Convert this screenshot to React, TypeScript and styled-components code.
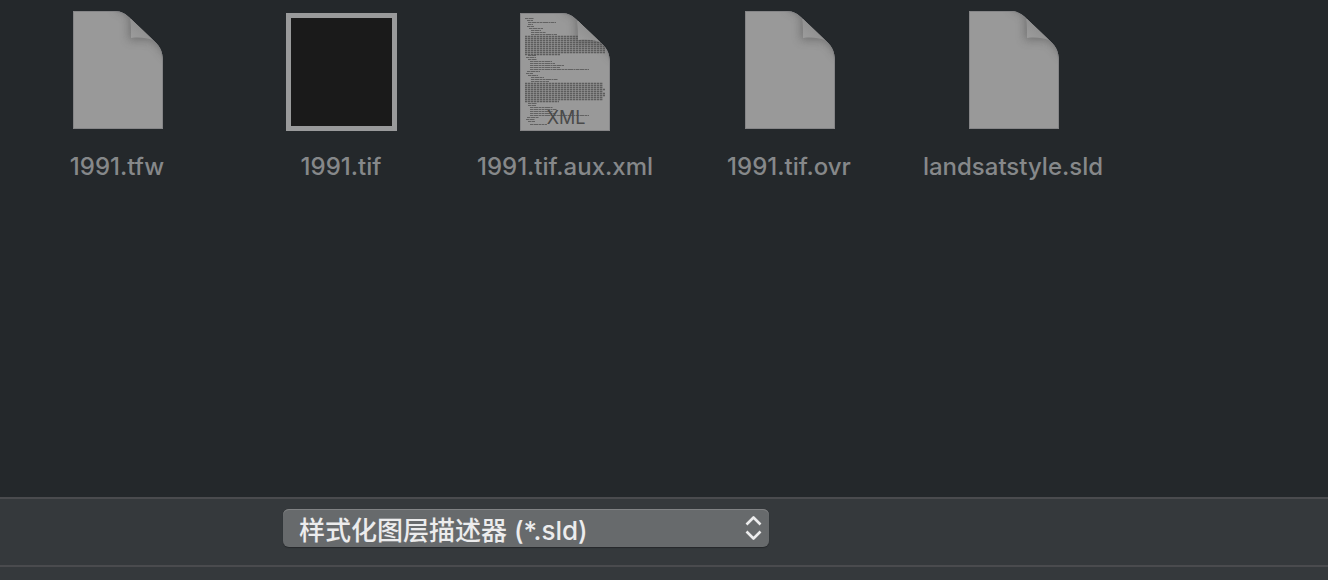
import React from "react";
import styled, { createGlobalStyle } from "styled-components";

const GlobalStyle = createGlobalStyle`
  *, *::before, *::after { box-sizing: border-box; }
  body {
    margin: 0;
    background: #24282b;
    font-family: Inter, "Noto Sans CJK SC", sans-serif;
  }
`;

const Dialog = styled.main`
  display: flex;
  flex-direction: column;
  min-height: 100vh;
`;

const FileGrid = styled.ul`
  flex: 1;
  display: grid;
  grid-template-columns: repeat(auto-fill, 224px);
  align-content: start;
  margin: 0;
  padding: 11px 5px;
  list-style: none;
`;

const FileItem = styled.li`
  display: flex;
  flex-direction: column;
  align-items: center;
  gap: 22px;
`;

const IconFrame = styled.div<{ $preview: boolean }>`
  display: flex;
  align-items: flex-start;
  justify-content: center;
  height: 120px;
  padding-top: ${({ $preview }) => ($preview ? "2px" : "0")};
`;

const Drawing = styled.svg`
  display: block;
  overflow: visible;
`;

const Thumbnail = styled.div`
  width: 111px;
  height: 118px;
  border: 5px solid #999a9b;
  background: #1a1a1a;
`;

const FileName = styled.span`
  color: #86888a;
  font-size: 24px;
  font-weight: 500;
  line-height: 28px;
  white-space: nowrap;
`;

const FilterBar = styled.footer`
  display: flex;
  height: 70px;
  padding: 10px 283px;
  border-top: 2px solid #4a4b4e;
  border-bottom: 2px solid #4a4b4e;
  background: #35393c;
`;

const BottomStrip = styled.div`
  height: 13px;
  background: #35393c;
`;

const SelectBox = styled.label`
  position: relative;
  flex: 0 0 486px;
  height: 38px;
`;

const FormatSelect = styled.select`
  appearance: none;
  width: 100%;
  height: 38px;
  padding: 4px 48px 0 16px;
  border: 0;
  border-radius: 6px;
  background: #676a6c;
  box-shadow: inset 0 1px 0 #808284, 0 1px 1px #26292b;
  color: #ececed;
  font-family: Inter, "Noto Sans CJK SC", sans-serif;
  font-size: 26px;
  font-weight: 500;
`;

const Chevrons = styled.svg`
  position: absolute;
  top: 6px;
  right: 7px;
  pointer-events: none;
`;

const PAGE = "M0 0H41C49 0 53 3 58 8L79 28C86 34 90 39 90 51V118H0Z";

function PageShape({ id }: { id: string }) {
  return (
    <>
      <defs>
        <clipPath id={`${id}-clip`}>
          <path d={PAGE} />
        </clipPath>
        <filter id={`${id}-soft`} x="-60%" y="-60%" width="220%" height="220%">
          <feGaussianBlur stdDeviation="5" />
        </filter>
        <linearGradient id={`${id}-fold`} x1="0" y1="1" x2="0.6" y2="0.4">
          <stop offset="0" stopColor="#9e9e9e" />
          <stop offset="1" stopColor="#8f8f8f" />
        </linearGradient>
      </defs>
      <path d={PAGE} fill="#999" />
      <g clipPath={`url(#${id}-clip)`}>
        <path d="M40 -4L56 4V29H80L96 48V26L60 -8Z" fill="#505050" opacity="0.55" filter={`url(#${id}-soft)`} />
        <path d={PAGE} fill="none" stroke="#858587" strokeWidth="2" />
      </g>
      <path d="M57 8C58 12 58 18 58 27C67 26 74 27 80 29L58 8Z" fill={`url(#${id}-fold)`} />
    </>
  );
}

function DocumentIcon({ id }: { id: string }) {
  return (
    <Drawing width="92" height="118" viewBox="-2 0 92 118" aria-hidden="true">
      <PageShape id={id} />
    </Drawing>
  );
}

// Source lines shown on the XML page: [x, y, length]
const SOURCE_LINES: [number, number, number][] = [
  [5, 5, 9], [7, 7, 6], [8, 9, 28], [8, 11, 5], [7, 13, 7], [9, 15, 14],
  [11, 17, 10], [11, 19, 15], [11, 21, 26],
  [8, 42, 8], [6, 44, 10], [8, 46, 9], [10, 48, 22], [10, 50, 25],
  [10, 52, 34], [10, 54, 30], [10, 56, 59], [7, 58, 13], [6, 60, 7],
  [8, 62, 10], [11, 64, 13], [11, 66, 27], [11, 68, 18],
  [8, 90, 9], [8, 92, 8], [10, 94, 23], [10, 96, 27], [10, 98, 23],
  [10, 100, 25], [10, 102, 59], [7, 104, 12], [6, 106, 9], [8, 108, 7], [10, 111, 17],
];

const DATA_BLOCKS: [number, number, number][] = [
  [5, 23, 53], [5, 25, 53], [5, 27, 75], [5, 29, 79], [5, 31, 80], [5, 33, 80], [5, 35, 80], [5, 37, 80], [5, 39, 80], [5, 41, 35],
  [5, 70, 78], [5, 72, 78], [5, 74, 78], [5, 76, 80], [5, 78, 78], [5, 80, 80], [5, 82, 80], [5, 84, 78], [5, 86, 78], [5, 88, 34],
];

function XmlIcon() {
  return (
    <Drawing width="92" height="118" viewBox="-1 0 92 118" role="img" aria-label="XML">
      <PageShape id="xml" />
      <g stroke="#4a4a4a" strokeWidth="1" strokeDasharray="3 0.5 5 0.5 2 0.5" opacity="0.7" clipPath="url(#xml-clip)">
        {SOURCE_LINES.map(([x, y, length]) => (
          <path key={y} d={`M${x} ${y + 0.5}h${length}`} />
        ))}
      </g>
      <g stroke="#4a4a4a" strokeWidth="1.3" strokeDasharray="2.4 0.6" opacity="0.75" clipPath="url(#xml-clip)">
        {DATA_BLOCKS.map(([x, y, length]) => (
          <path key={y} d={`M${x} ${y + 0.5}h${length}`} />
        ))}
      </g>
      <path d="M57 8C58 12 58 18 58 27C67 26 74 27 80 29L58 8Z" fill="url(#xml-fold)" />
      <text x="46" y="111" textAnchor="middle" fontFamily="Inter, sans-serif" fontSize="18" fill="#4a4a4a">
        XML
      </text>
    </Drawing>
  );
}

type FileKind = "document" | "image" | "xml";

const FILES: { name: string; kind: FileKind }[] = [
  { name: "1991.tfw", kind: "document" },
  { name: "1991.tif", kind: "image" },
  { name: "1991.tif.aux.xml", kind: "xml" },
  { name: "1991.tif.ovr", kind: "document" },
  { name: "landsatstyle.sld", kind: "document" },
];

function FileIcon({ kind, id }: { kind: FileKind; id: string }) {
  if (kind === "image") return <Thumbnail />;
  if (kind === "xml") return <XmlIcon />;
  return <DocumentIcon id={id} />;
}

export default function App() {
  return (
    <>
      <GlobalStyle />
      <Dialog>
        <FileGrid>
          {FILES.map((file, index) => (
            <FileItem key={file.name}>
              <IconFrame $preview={file.kind !== "document"}>
                <FileIcon kind={file.kind} id={`file${index}`} />
              </IconFrame>
              <FileName>{file.name}</FileName>
            </FileItem>
          ))}
        </FileGrid>
        <FilterBar>
          <SelectBox>
            <FormatSelect aria-label="样式化图层描述器" defaultValue="sld">
              <option value="sld">样式化图层描述器 (*.sld)</option>
            </FormatSelect>
            <Chevrons width="18" height="26" viewBox="0 0 18 26" fill="none" stroke="#ececed" strokeWidth="2.6" strokeLinejoin="round" aria-hidden="true">
              <path d="M2.5 9.5L9.5 2.5L16.5 9.5M2.5 16.5L9.5 23.5L16.5 16.5" />
            </Chevrons>
          </SelectBox>
        </FilterBar>
        <BottomStrip />
      </Dialog>
    </>
  );
}
